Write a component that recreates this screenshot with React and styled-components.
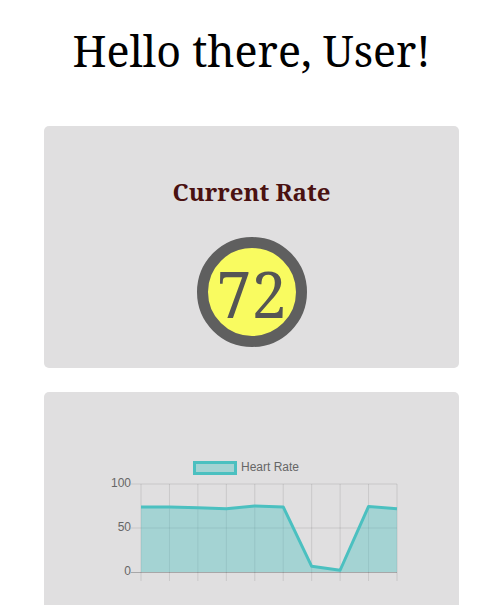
import React from "react";
import styled, { createGlobalStyle } from "styled-components";

const GlobalStyle = createGlobalStyle`
  html, body {
    margin: 0;
    padding: 0;
    background: #ffffff;
  }
  body {
    font-family: "Noto Serif", serif;
  }
`;

const Page = styled.div`
  // layout
  display: flex;
  flex-direction: column;
  align-items: center;
  // box
  padding: 21px 44px 0;
`;

const Greeting = styled.h1`
  margin: 0 0 45px;
  font-size: 43px;
  line-height: 60px;
  font-weight: 400;
  color: #000;
  text-align: center;
`;

const Card = styled.section`
  // layout
  display: flex;
  flex-direction: column;
  align-items: center;
  // box
  width: 100%;
  height: ${(p) => p.$height}px;
  padding: ${(p) => p.$padTop || 0}px 0 0;
  margin-bottom: 24px;
  box-sizing: border-box;
  // inside
  background: #e0dfe0;
  border-radius: 5px;
`;

const CardTitle = styled.h2`
  margin: 0;
  font-size: 24px;
  line-height: 30px;
  font-weight: 700;
  color: #4a1111;
`;

const RateBadge = styled.div`
  // layout
  display: flex;
  justify-content: center;
  align-items: center;
  // box
  width: 88px;
  height: 86px;
  margin-top: 30px;
  padding-top: 2px;
  box-sizing: content-box;
  // inside
  border: 11px solid #5f5f5f;
  border-radius: 50%;
  background: #f9fb60;
  color: #555555;
  font-size: 63px;
  line-height: 1;
`;

const ChartSvg = styled.svg`
  display: block;
  width: 415px;
  height: 260px;
  font-family: "Liberation Sans", Arial, sans-serif;
`;

const values = [74, 74, 73, 72, 75, 74, 6.5, 2, 74.5, 72];
// chart area in card coordinates
const left = 97;
const right = 353;
const top = 92;
const zero = 180;
const xAt = (i) => left + (i * (right - left)) / (values.length - 1);
const yAt = (v) => zero - (v / 100) * (zero - top);

function HeartChart() {
  const pts = values.map((v, i) => `${xAt(i)},${yAt(v)}`).join(" ");
  const area = `${left},${zero} ${pts} ${right},${zero}`;
  return (
    <ChartSvg viewBox="0 0 415 260">
      {/* legend */}
      <rect x="150.5" y="70.5" width="41" height="11" fill="rgba(75,192,192,0.4)" stroke="#4bc0c0" strokeWidth="3" />
      <text x="197" y="76" fontSize="12" fill="#666" dominantBaseline="middle">Heart Rate</text>

      {/* horizontal grid */}
      {[100, 50].map((v) => (
        <line key={v} x1={left - 10} x2={right} y1={yAt(v)} y2={yAt(v)} stroke="rgba(0,0,0,0.1)" />
      ))}
      {/* vertical grid */}
      {values.map((_, i) => (
        <line key={i} x1={xAt(i)} x2={xAt(i)} y1={top} y2={zero + 9} stroke="rgba(0,0,0,0.1)" />
      ))}

      <polygon points={area} fill="rgba(75,192,192,0.4)" />
      <line x1={left - 10} x2={right} y1={zero + 0.5} y2={zero + 0.5} stroke="rgba(0,0,0,0.25)" />
      <polyline points={pts} fill="none" stroke="#4bc0c0" strokeWidth="3" strokeLinejoin="round" />

      {/* y labels */}
      {[100, 50, 0].map((v) => (
        <text key={v} x={left - 10} y={yAt(v)} fontSize="12" fill="#666" textAnchor="end" dominantBaseline="middle">
          {v}
        </text>
      ))}
    </ChartSvg>
  );
}

export default function App() {
  return (
    <>
      <GlobalStyle />
      <Page>
        <Greeting>Hello there, User!</Greeting>
        <Card $height={242} $padTop={51}>
          <CardTitle>Current Rate</CardTitle>
          <RateBadge>72</RateBadge>
        </Card>
        <Card $height={260}>
          <HeartChart />
        </Card>
      </Page>
    </>
  );
}
